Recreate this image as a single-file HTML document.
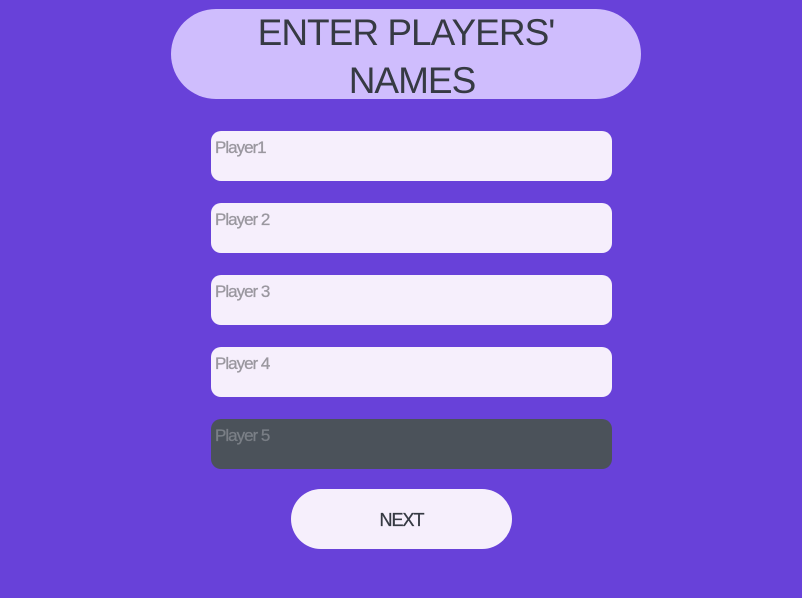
<!DOCTYPE html>
<html><head><style>
html,body{margin:0;padding:0;width:802px;height:598px;overflow:hidden;background:#6841d9;font-family:"Liberation Sans",sans-serif;}
.h{position:absolute;left:171px;top:9px;width:470px;height:90px;border-radius:45px;background:#cfbdfd;color:#363a43;font-size:37px;text-align:center;line-height:46px;letter-spacing:-1px;}
.h div{position:absolute;left:0;right:0;}
.i{position:absolute;left:211px;width:401px;height:50px;border-radius:10px;background:#f6effc;}
.i span{position:absolute;left:4px;top:7px;font-size:17px;color:#9a979f;letter-spacing:-1px;-webkit-text-stroke:0.3px #9a979f;}
.d{background:#4b525a}.d span{color:#7a7f86;-webkit-text-stroke:0.3px #7a7f86}
.b{position:absolute;left:291px;top:489px;width:221px;height:60px;border-radius:30px;background:#f6effc;color:#363a43;font-size:18px;line-height:62px;text-align:center;letter-spacing:-1px;-webkit-text-stroke:0.3px #363a43;}
</style></head><body>
<div class="h"><div style="top:1px">ENTER PLAYERS'</div><div style="top:49px;padding-left:12px">NAMES</div></div>
<div class="i" style="top:131px"><span>Player1</span></div>
<div class="i" style="top:203px"><span>Player 2</span></div>
<div class="i" style="top:275px"><span>Player 3</span></div>
<div class="i" style="top:347px"><span>Player 4</span></div>
<div class="i d" style="top:419px"><span>Player 5</span></div>
<div class="b">NEXT</div>
</body></html>
